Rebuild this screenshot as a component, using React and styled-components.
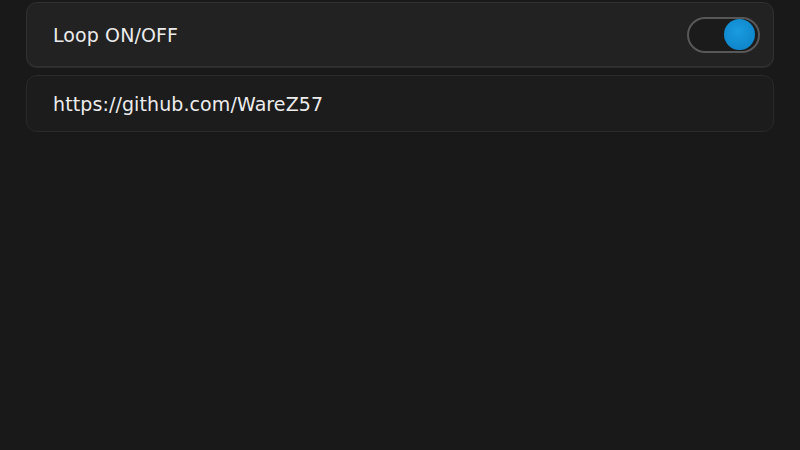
import styled, { createGlobalStyle } from "styled-components";
import { useState } from "react";

const GlobalStyle = createGlobalStyle`
  html, body {
    margin: 0;
    background: #191919;
  }
  body {
    font-family: "DejaVu Sans", "Noto Sans", sans-serif;
    color: #ececec;
  }
`;

const Page = styled.div`
  min-height: 450px;
  padding: 2px 26px 0;
  display: flex;
  flex-direction: column;
  gap: 8px;
  box-sizing: border-box;
`;

const Card = styled.div`
  height: ${(p) => p.$height}px;
  box-sizing: border-box;
  display: flex;
  align-items: center;
  justify-content: space-between;
  padding: 0 13px 0 26px;
  border-radius: 11px;
  border: 1px solid ${(p) => (p.$raised ? "#303030" : "#2a2a2a")};
  background: ${(p) => (p.$raised ? "#222222" : "#1c1c1c")};
  box-shadow: ${(p) => (p.$raised ? "0 1px 0 #2c2c2c" : "none")};
`;

const Label = styled.span`
  font-size: 19px;
  letter-spacing: 0.1px;
  color: #ececec;
`;

const Track = styled.button`
  width: 73px;
  height: 36px;
  box-sizing: border-box;
  border-radius: 18px;
  border: 2px solid #575757;
  background: #1b1b1b;
  padding: 0 3px;
  display: flex;
  align-items: center;
  justify-content: ${(p) => (p.$on ? "flex-end" : "flex-start")};
  cursor: pointer;
`;

const Knob = styled.span`
  width: 31px;
  height: 31px;
  border-radius: 50%;
  background: ${(p) => (p.$on ? "radial-gradient(circle at 45% 40%, #1a9be0, #0a7fc4)" : "#777")};
`;

function Toggle() {
  const [on, setOn] = useState(true);
  return (
    <Track $on={on} onClick={() => setOn(!on)}>
      <Knob $on={on} />
    </Track>
  );
}

export default function App() {
  return (
    <>
      <GlobalStyle />
      <Page>
        <Card $height={65} $raised>
          <Label>Loop ON/OFF</Label>
          <Toggle />
        </Card>
        <Card $height={57}>
          <Label>https://github.com/WareZ57</Label>
        </Card>
      </Page>
    </>
  );
}
